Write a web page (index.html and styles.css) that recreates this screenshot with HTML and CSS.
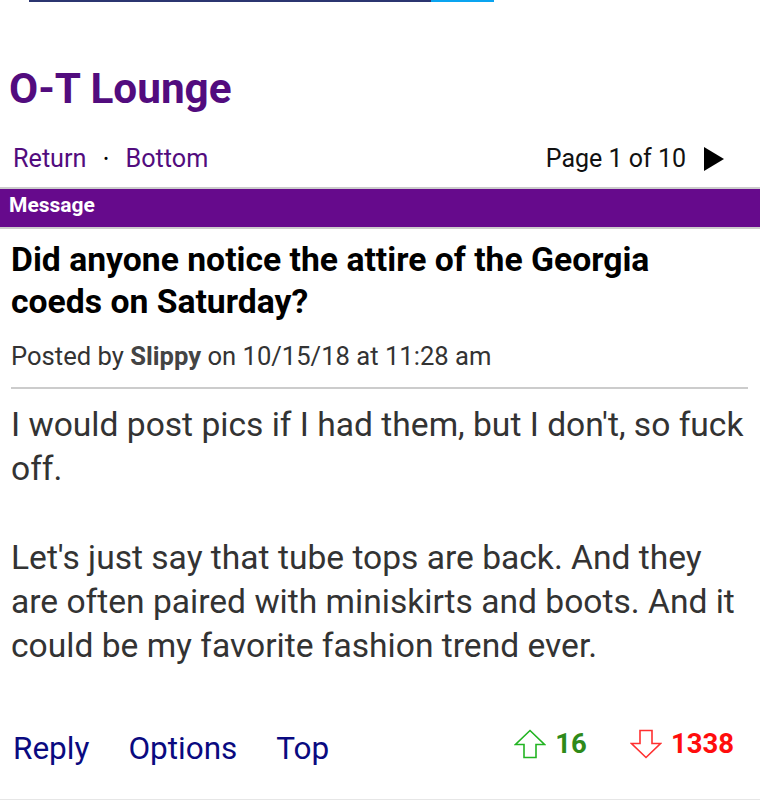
FILE: index.html
```
<!DOCTYPE html>
<html>
<head>
<meta charset="utf-8">
<link rel="stylesheet" href="styles.css">
</head>
<body>
<div class="topline"><span class="seg-navy"></span><span class="seg-blue"></span></div>
<h1 class="board">O-T Lounge</h1>
<div class="nav">
  <div class="nav-links"><a class="navlink">Return</a><span class="dot">•</span><a class="navlink">Bottom</a></div>
  <div class="pager"><span>Page 1 of 10</span><svg class="next" width="20" height="24" viewBox="0 0 20 24"><polygon points="0,0 20,12 0,24" fill="#000"/></svg></div>
</div>
<div class="bar">Message</div>
<div class="post">
  <h2 class="subject">Did anyone notice the attire of the Georgia coeds on Saturday?</h2>
  <div class="meta">Posted by <b>Slippy</b> on 10/15/18 at 11:28 am</div>
  <div class="body">I would post pics if I had them, but I don't, so fuck off.<br><br>Let's just say that tube tops are back. And they are often paired with miniskirts and boots. And it could be my favorite fashion trend ever.</div>
  <div class="actions">
    <div class="links"><a class="act">Reply</a><a class="act">Options</a><a class="act">Top</a></div>
    <div class="votes">
      <span class="vote up"><svg width="32" height="30" viewBox="0 0 32 30"><path d="M16 1.5 L30.5 15.5 L22 15.5 L22 28.5 L10 28.5 L10 15.5 L1.5 15.5 Z" fill="none" stroke="#22b422" stroke-width="1.6"/></svg><span class="num">16</span></span>
      <span class="vote down"><svg width="32" height="30" viewBox="0 0 32 30"><path d="M10 1.5 L22 1.5 L22 14.5 L30.5 14.5 L16 28.5 L1.5 14.5 L10 14.5 Z" fill="none" stroke="#ff3030" stroke-width="1.6"/></svg><span class="num">1338</span></span>
    </div>
  </div>
</div>
<div class="bottomline"></div>
</body>
</html>
```
FILE: styles.css
```
html, body { margin: 0; padding: 0; background: #fff; }
body { font-family: Roboto, "Noto Sans", sans-serif; width: 760px; height: 800px; overflow: hidden; position: relative; }
.topline { display: flex; height: 2px; padding-left: 29px; }
.seg-navy { width: 402px; background: #2b3570; }
.seg-blue { width: 63px; background: #0aa4f0; }
.board { margin: 0; padding: 62px 0 0 9px; font-size: 42.3px; font-weight: 700; color: #520c7e; line-height: 50px; }
.nav { display: flex; justify-content: space-between; align-items: center; margin-top: 27px; padding: 0 36px 0 13px; height: 36px; }
.nav-links { display: flex; align-items: center; font-size: 25.2px; line-height: 36px; color: #520c7e; }
.dot { font-size: 15px; color: #000; margin: 0 17px; }
.pager { display: flex; align-items: center; font-size: 25px; line-height: 36px; color: #111; gap: 18px; }
.bar { margin-top: 10px; border-top: 2px solid #ccc; border-bottom: 2px solid #ccc; background: #660a8c; color: #fff; font-weight: 700; font-size: 21px; line-height: 32px; padding: 0 0 6px 9px; }
.post { padding: 0 12px 0 11px; }
.subject { margin: 0; padding: 10px 14px 0 0; font-size: 33.7px; line-height: 42px; font-weight: 700; color: #000; }
.meta { margin-top: 18px; font-size: 25.6px; color: #333; padding-bottom: 16px; border-bottom: 2px solid #ccc; line-height: 30px; }
.meta b { font-weight: 700; color: #444; }
.body { margin-top: 14px; font-size: 33.6px; line-height: 44.3px; color: #333; }
.actions { display: flex; justify-content: space-between; align-items: flex-start; margin-top: 60px; padding-left: 2px; padding-right: 14px; }
.links { display: flex; gap: 39px; }
.act { font-size: 31.5px; line-height: 40px; color: #0a0a80; }
.votes { display: flex; gap: 43px; align-items: center; margin-top: 0; }
.vote { display: flex; align-items: center; gap: 9px; font-weight: 700; font-size: 27.5px; line-height: 30px; }
.up .num { color: #2e8a1a; }
.down .num { color: #ff0d0d; }
.bottomline { position: absolute; left: 0; right: 0; bottom: 0; height: 1px; background: #e6e6e6; }
```
